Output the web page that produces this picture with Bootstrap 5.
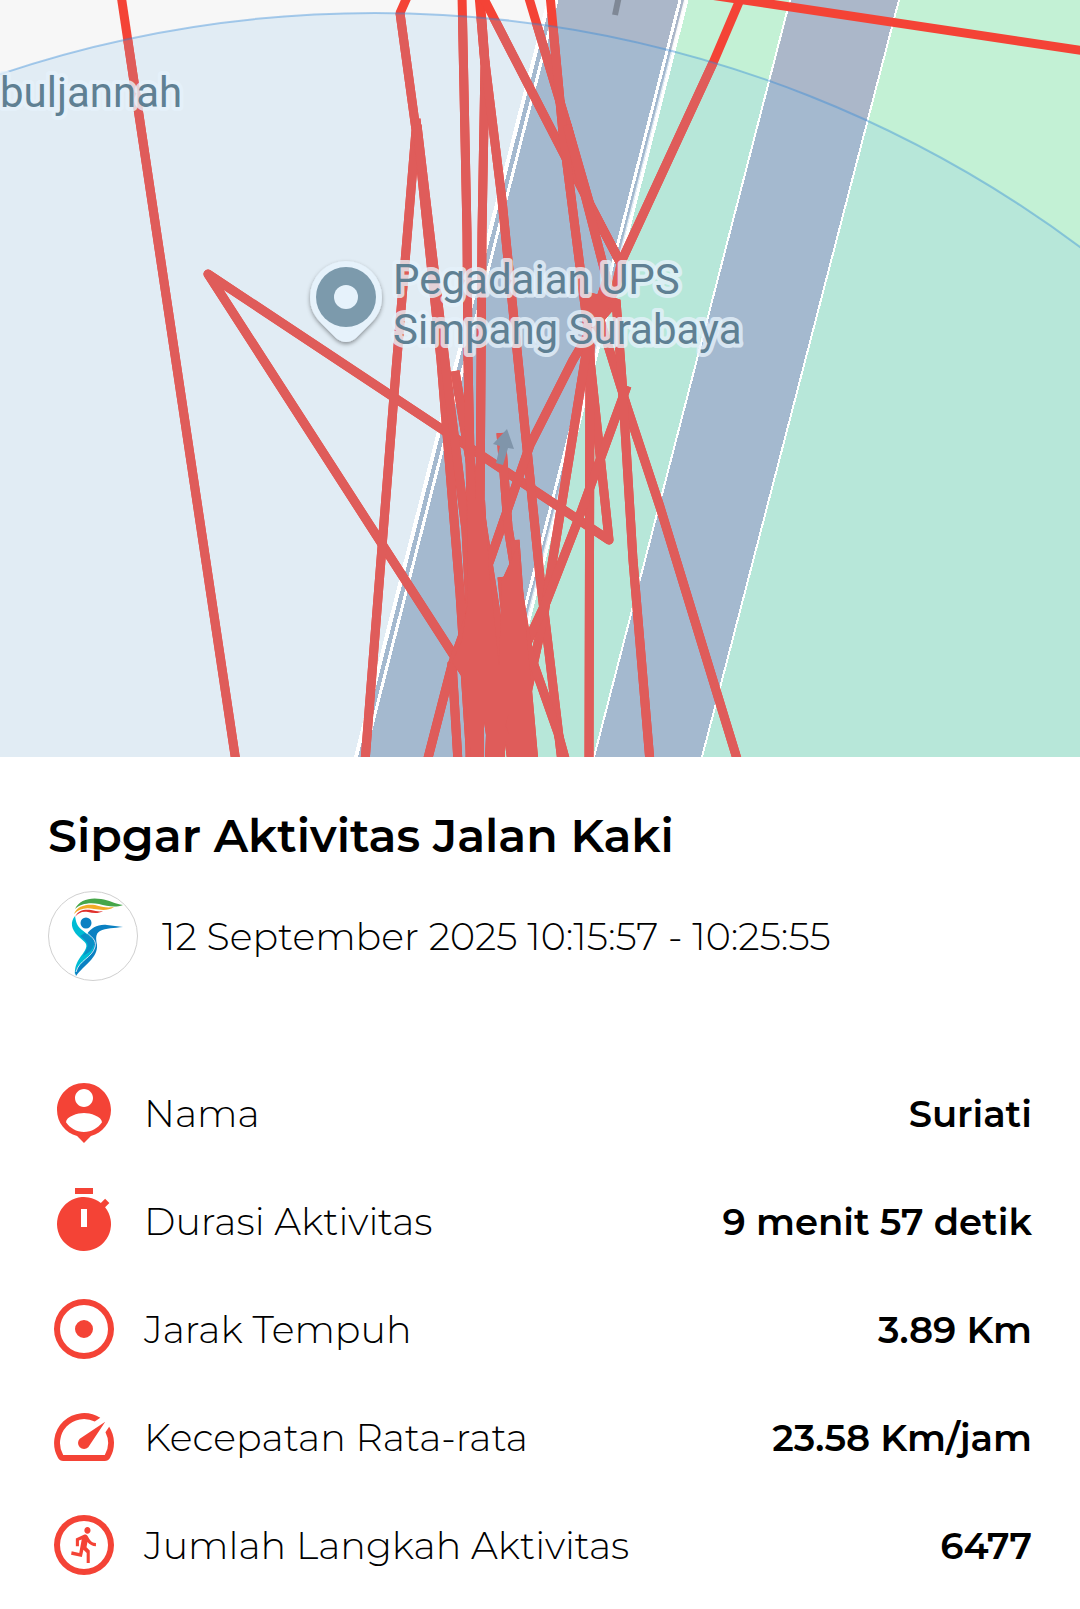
<!DOCTYPE html>
<html lang="id">
<head>
<meta charset="utf-8">
<meta name="viewport" content="width=device-width, initial-scale=1">
<title>Sipgar Aktivitas Jalan Kaki</title>
<link href="https://cdn.jsdelivr.net/npm/bootstrap@5.3.0/dist/css/bootstrap.min.css" rel="stylesheet">
<style>
  body { font-family: Montserrat, Inter, sans-serif; color: #000; background: #fff; }
  .route-map { display: block; width: 100%; height: auto; }
  .route-line { color: #f44336; }
  .route-line-inside { color: #df5c5a; }
  .place-label { font-family: Roboto, sans-serif; font-size: 42px; fill: #5f8093; stroke: #e6f2fb; stroke-opacity: .8; stroke-width: 8px; stroke-linejoin: round; paint-order: stroke; }
  .detail { padding: 54px 48px 10px; }
  .detail-title { font-size: 46px; line-height: 50px; font-weight: 600; margin-bottom: 30px; }
  .detail-text, .detail-value { line-height: 48px; padding-top: 2px; }
  .detail-text { font-size: 38px; font-weight: 300; }
  .detail-value { font-size: 37px; font-weight: 600; }
  .who { gap: 24px; margin-bottom: 78px; }
  .logo { width: 90px; height: 90px; }
  .stat { gap: 24px; min-height: 108px; }
  .stat-icon { width: 72px; height: 72px; fill: #f44336; }
</style>
</head>
<body>
<main>
  <svg class="route-map" viewBox="0 0 1080 757" role="img" aria-label="Peta rute">
    <defs>
      <filter id="pinShadow" x="-30%" y="-30%" width="160%" height="160%"><feDropShadow dx="0" dy="2" stdDeviation="2" flood-color="#000" flood-opacity=".4"/></filter>
      <clipPath id="radius"><circle cx="375" cy="1192" r="1179"/></clipPath>
      <!-- recorded route -->
      <g id="route" fill="none" stroke="currentColor" stroke-width="9" stroke-linejoin="bevel">
        <path d="M121 -5L236 762"/>
        <path stroke-linejoin="round" d="M467 676L208 274L609 540L589 350"/>
        <path d="M408 -5L400 13L416 130L396 370L365 762"/>
        <path d="M416 119L441 360L460 593L471 762"/>
        <path d="M417 125L446 370L466 530L478 762"/>
        <path d="M455 371L475 490L495 640L512 762"/>
        <path d="M462 -5L467 233L468 360L473 600L470 762"/>
        <path d="M479 -5L485 65L482 233L480 510L500 640L516 762"/>
        <path d="M480 -5L485 62L502 200L518 360L540 577L562 762"/>
        <path d="M482 -5L567 160L620 262"/>
        <path d="M528 -5L567 125L590 205L620 262"/>
        <path d="M550 -5L563 133L580 267L590 345L589 762"/>
        <path d="M567 125L607 280L597 310L628 410L660 507L738 762"/>
        <path d="M742 -5L713 63L622 260L615 290L573 360L530 445L490 560L452 665L427 762"/>
        <path d="M452 662L458 762"/>
        <path d="M590 335L585 360L558 527L543 620L512 762"/>
        <path d="M627 386L577 523L547 600L527 643L511 700"/>
        <path d="M590 330L616 300L622 380L633 560L650 762"/>
        <path d="M501 433L508 527L527 645L558 733L566 762"/>
        <path d="M502 577L510 660L520 762"/>
        <path d="M515 540L523 650L531 762"/>
        <path d="M690 -8L1085 51"/>
        <path fill="currentColor" stroke="none" fill-rule="evenodd" d="M467 500H485L489 570L499 665L502 580L518 545L527 640L532 690L538 757H471L464 680L452 662L462 640L468 600ZM505 725L509 714V734ZM505 741L511 757H505ZM484 722L486 735L485 757H484Z"/>
        <path fill="currentColor" stroke="none" d="M580 290L600 295L617 290L592 345Z"/>
      </g>
    </defs>
    <!-- ground, park and roads -->
    <rect width="1080" height="757" fill="#f7f7f7"/>
    <path d="M686 0H1080V757H493Z" fill="#c3f1d5"/>
    <path d="M549 0H684L491 757H356Z M791 0H899L702 757H594Z" fill="#abb7c9"/>
    <path d="M619 -4L615 15" stroke="#7f8896" stroke-width="6"/>
    <!-- accuracy radius -->
    <circle cx="375" cy="1192" r="1179" fill="#8bc3eb" fill-opacity=".195"/>
    <g stroke="#fff" fill="none" shape-rendering="crispEdges">
      <path stroke-width="4" d="M549 0L356 757"/>
      <path stroke-width="3" d="M557 0L364 757M680 0L487 757M687 0L494 757"/>
      <path stroke-width="2" d="M790 0L594 757M899 0L702 757"/>
    </g>
    <use href="#route" class="route-line"/>
    <g clip-path="url(#radius)"><use href="#route" class="route-line-inside"/></g>
    <circle cx="375" cy="1192" r="1179" fill="none" stroke="#2f86d6" stroke-opacity=".4" stroke-width="2"/>
    <path d="M507 429L493 444L500 446L496 463L503 465L508 448L514 449Z" fill="#8095aa"/>
    <!-- place marker and labels -->
    <path filter="url(#pinShadow)" fill="#e6f2fb" d="M346 261A36 36 0 0 0 310 297C310 309 315 317 322 324L336 338Q346 346 356 338L370 324C377 317 382 309 382 297A36 36 0 0 0 346 261Z"/>
    <circle cx="346" cy="297" r="30" fill="#7c9aac"/>
    <circle cx="346" cy="297" r="12" fill="#e6f2fb"/>
    <text class="place-label" x="0" y="107">buljannah</text>
    <text class="place-label" x="393" y="294">Pegadaian UPS</text>
    <text class="place-label" x="393" y="344">Simpang Surabaya</text>
  </svg>

  <section class="detail">
    <h1 class="detail-title">Sipgar Aktivitas Jalan Kaki</h1>
    <div class="who d-flex align-items-center">
      <svg class="logo flex-shrink-0" viewBox="0 0 90 90" aria-hidden="true">
        <circle cx="45" cy="45" r="44.5" fill="#fff" stroke="#d0d0d0"/>
        <path fill="#46a64a" d="M27 18C31 9 42 6 53 8C61 9 67 13 75 14C67 17 59 15 51 13C41 11 32 13 27 18Z"/>
        <path fill="#f2ab27" d="M26 23C29 15 38 13 47 14C54 16 59 17 66 16C60 20 53 19 46 18C37 16 31 18 26 23Z"/>
        <path fill="#e0302c" d="M27 26C30 19 37 18 43 19C48 20 51 21 55 20C50 23 45 22 40 21C34 20 30 22 27 26Z"/>
        <path fill="#00bcd4" d="M27 25C22 31 23 38 30 45C35 50 40 52 38 57C35 65 26 70 27 84C31 74 47 67 48 55C49 48 40 44 34 39C28 34 28 30 27 25Z"/>
        <path fill="#0a80c2" d="M39 43C43 37 50 33 59 34L75 36C66 37 58 37 52 40C47 43 48 48 49 54C50 67 36 74 28 85L27 81C30 72 44 66 46 56C47 50 43 46 39 43Z"/>
        <path fill="#0a8fc6" d="M32 45C38 50 41 52 39 57L35 65C40 62 45 59 46 53C46 48 41 45 37 42Z"/>
        <path fill="none" stroke="#fff" stroke-width=".8" d="M35 39C43 45 49 49 47 56C44 67 31 69 28 81"/>
        <circle cx="38" cy="32" r="5.5" fill="#0a80c2"/>
      </svg>
      <time class="detail-text" datetime="2025-09-12T10:15:57">12 September 2025 10:15:57 - 10:25:55</time>
    </div>

    <dl class="mb-0">
      <div class="stat d-flex align-items-center">
        <svg class="stat-icon flex-shrink-0" viewBox="0 0 24 24" aria-hidden="true"><path d="M12 2c-4.97 0-9 4.03-9 9 0 4.17 2.84 7.67 6.69 8.69L12 22l2.31-2.31C18.16 18.67 21 15.17 21 11c0-4.97-4.03-9-9-9zm0 2c1.66 0 3 1.34 3 3s-1.34 3-3 3-3-1.34-3-3 1.34-3 3-3zm0 14.3c-2.5 0-4.71-1.28-6-3.22.03-1.99 4-3.08 6-3.08 1.99 0 5.97 1.09 6 3.08-1.29 1.94-3.5 3.22-6 3.22z"/></svg>
        <dt class="detail-text flex-grow-1">Nama</dt>
        <dd class="detail-value mb-0 text-end">Suriati</dd>
      </div>
      <div class="stat d-flex align-items-center">
        <svg class="stat-icon flex-shrink-0" viewBox="0 0 24 24" aria-hidden="true"><path d="M9 1h6v2H9zM19.03 7.39l1.42-1.42-1.41-1.41-1.42 1.42A9 9 0 1 0 19.03 7.39zM13 14h-2V8h2z"/></svg>
        <dt class="detail-text flex-grow-1">Durasi Aktivitas</dt>
        <dd class="detail-value mb-0 text-end">9 menit 57 detik</dd>
      </div>
      <div class="stat d-flex align-items-center">
        <svg class="stat-icon flex-shrink-0" viewBox="0 0 24 24" aria-hidden="true"><path d="M12 2a10 10 0 1 0 0 20 10 10 0 0 0 0-20zm0 18a8 8 0 1 1 0-16 8 8 0 0 1 0 16zm0-11a3 3 0 1 0 0 6 3 3 0 0 0 0-6z"/></svg>
        <dt class="detail-text flex-grow-1">Jarak Tempuh</dt>
        <dd class="detail-value mb-0 text-end">3.89 Km</dd>
      </div>
      <div class="stat d-flex align-items-center">
        <svg class="stat-icon flex-shrink-0" viewBox="0 0 24 24" aria-hidden="true"><path d="M20.38 8.57l-1.23 1.85a8 8 0 0 1-.22 7.58H5.07A8 8 0 0 1 15.58 6.85l1.85-1.23A10 10 0 0 0 3.35 19a2 2 0 0 0 1.72 1h13.85a2 2 0 0 0 1.74-1 10 10 0 0 0-.27-10.44zm-9.79 6.84a2 2 0 0 0 2.83 0l5.66-8.49-8.49 5.66a2 2 0 0 0 0 2.83z"/></svg>
        <dt class="detail-text flex-grow-1">Kecepatan Rata-rata</dt>
        <dd class="detail-value mb-0 text-end">23.58 Km/jam</dd>
      </div>
      <div class="stat d-flex align-items-center">
        <svg class="stat-icon flex-shrink-0" viewBox="0 0 24 24" aria-hidden="true"><path d="M12 2a10 10 0 1 0 0 20 10 10 0 0 0 0-20zm0 18a8 8 0 1 1 0-16 8 8 0 0 1 0 16z"/><path transform="translate(6.2 5.2) scale(.515 .557)" d="M13.49 5.48c1.1 0 2-.9 2-2s-.9-2-2-2-2 .9-2 2 .9 2 2 2zm-3.6 13.9l1-4.4 2.1 2v6h2v-7.5l-2.1-2 .6-3c1.3 1.5 3.3 2.5 5.5 2.5v-2c-1.9 0-3.5-1-4.3-2.4l-1-1.6c-.4-.6-1-1-1.7-1-.3 0-.5.1-.8.1l-5.2 2.2v4.7h2v-3.4l1.8-.7-1.6 8.1-4.9-1-.4 2 7 1.4z"/></svg>
        <dt class="detail-text flex-grow-1">Jumlah Langkah Aktivitas</dt>
        <dd class="detail-value mb-0 text-end">6477</dd>
      </div>
    </dl>
  </section>
</main>
<script src="https://cdn.jsdelivr.net/npm/bootstrap@5.3.0/dist/js/bootstrap.bundle.min.js"></script>
</body>
</html>
